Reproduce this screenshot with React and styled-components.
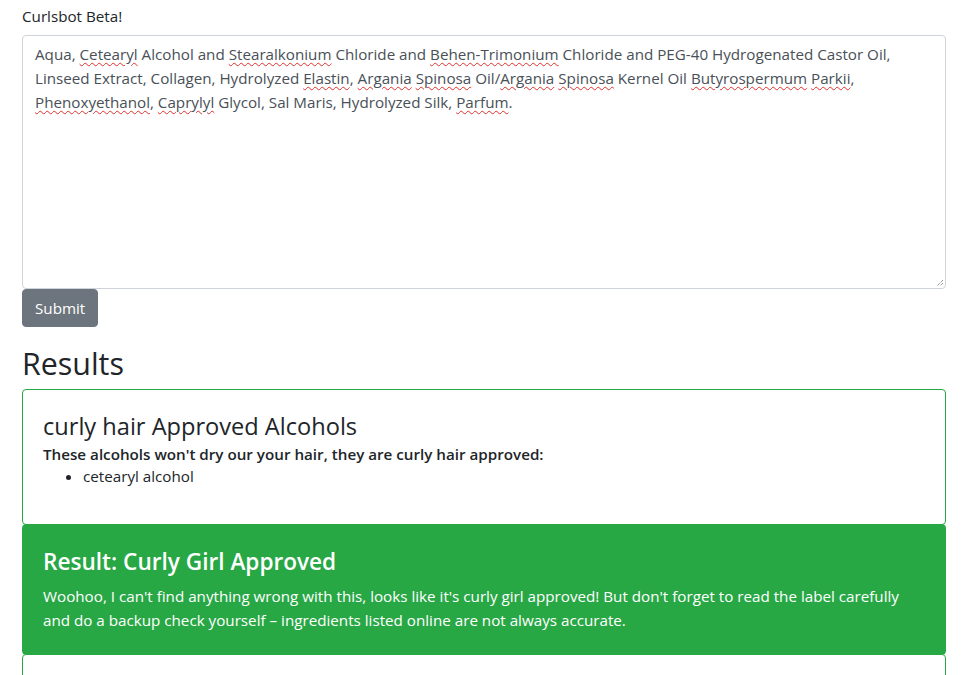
import styled, { createGlobalStyle } from 'styled-components'

const GlobalStyle = createGlobalStyle`
  * { box-sizing: border-box; }
  body {
    margin: 0;
    background: #fff;
    color: #212529;
    font-family: "Open Sans", "Noto Sans", sans-serif;
    font-size: 15.2px;
    line-height: 24px;
  }
`

const Page = styled.div`
  padding: 4px 20px 0 22px;
`

const Label = styled.label`
  display: block;
  line-height: 24px;
  margin-bottom: 7px;
`

const Field = styled.div`
  position: relative;
  height: 254px;
  border: 1px solid #ced4da;
  border-radius: 4px;
  padding: 6px 12px;
  color: #495057;
  line-height: 24px;
`

const Misspelled = styled.span`
  text-decoration: underline wavy #e0302b;
  text-decoration-thickness: 1px;
  text-underline-offset: 2px;
`

const Grip = styled.svg`
  position: absolute;
  right: 1px;
  bottom: 1px;
  width: 10px;
  height: 10px;
`

const Button = styled.button`
  display: inline-block;
  font-family: inherit;
  font-size: 15.2px;
  line-height: 24px;
  padding: 6px 12px;
  color: #fff;
  background: #6c757d;
  border: 1px solid #6c757d;
  border-radius: 4px;
  cursor: pointer;
`

const Heading = styled.h2`
  font-size: 30.4px;
  font-weight: 500;
  line-height: 38px;
  margin: 18px 0 6px;
`

const CardGroup = styled.div`
  display: flex;
  flex-direction: column;
`

const Card = styled.div`
  border: 1px solid #28a745;
  border-radius: 4px;
  background: ${p => (p.$filled ? '#28a745' : '#fff')};
  color: ${p => (p.$filled ? '#fff' : '#212529')};
  padding: ${p => (p.$filled ? '20px 20px 22px' : '20px')};
  min-height: ${p => p.$minHeight || 0}px;

  & + & {
    margin-top: -1px;
  }
`

const CardTitle = styled.h4`
  font-size: ${p => (p.$bold ? 22.6 : 23.6)}px;
  font-weight: ${p => (p.$bold ? 600 : 400)};
  line-height: 29px;
  margin: 2px 0 ${p => p.$gap}px;
`

const Strong = styled.div`
  font-weight: 600;
  line-height: 22px;
`

const List = styled.ul`
  margin: 0 0 17px;
  padding-left: 40px;
  line-height: 22px;
`

const Text = styled.p`
  margin: 0;
`

const words = [
  ['Aqua, '], ['Cetearyl', 1], [' Alcohol and '], ['Stearalkonium', 1], [' Chloride and '],
  ['Behen-Trimonium', 1], [' Chloride and PEG-40 Hydrogenated Castor Oil, Linseed Extract, Collagen, Hydrolyzed '],
  ['Elastin', 1], [', '], ['Argania', 1], [' '], ['Spinosa', 1], [' Oil/'], ['Argania', 1], [' '], ['Spinosa', 1],
  [' Kernel Oil '], ['Butyrospermum', 1], [' '], ['Parkii', 1], [', '], ['Phenoxyethanol', 1], [', '],
  ['Caprylyl', 1], [' Glycol, Sal Maris, Hydrolyzed Silk, '], ['Parfum', 1], ['.']
]

export default function App() {
  return (
    <>
      <GlobalStyle />
      <Page>
        <Label>Curlsbot Beta!</Label>
        <Field>
          {words.map(([w, bad], i) => (bad ? <Misspelled key={i}>{w}</Misspelled> : <span key={i}>{w}</span>))}
          <Grip viewBox="0 0 10 10">
            <path d="M9 3 L3 9 M9 6 L6 9" stroke="#666" strokeWidth="1" strokeDasharray="1 1" />
          </Grip>
        </Field>
        <Button>Submit</Button>
        <Heading>Results</Heading>
        <CardGroup>
          <Card>
            <CardTitle $gap={2}>curly hair Approved Alcohols</CardTitle>
            <Strong>These alcohols won't dry our your hair, they are curly hair approved:</Strong>
            <List>
              <li>cetearyl alcohol</li>
            </List>
          </Card>
          <Card $filled>
            <CardTitle $bold $gap={8}>Result: Curly Girl Approved</CardTitle>
            <Text>
              Woohoo, I can't find anything wrong with this, looks like it's curly girl approved! But don't forget to
              read the label carefully and do a backup check yourself – ingredients listed online are not always accurate.
            </Text>
          </Card>
          <Card $minHeight={120} />
        </CardGroup>
      </Page>
    </>
  )
}
